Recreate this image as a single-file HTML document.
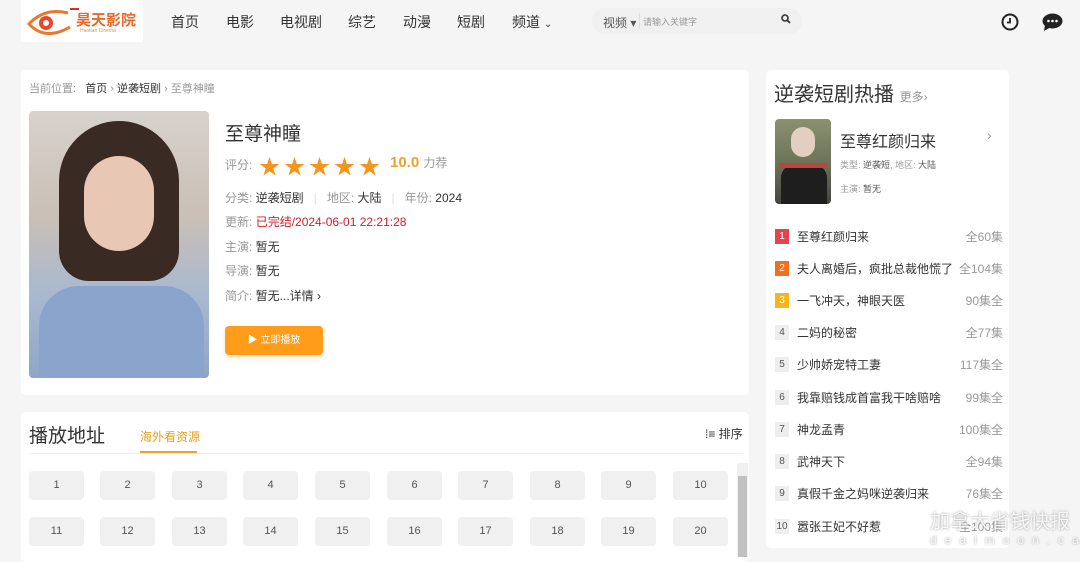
<!DOCTYPE html>
<html><head><meta charset="utf-8"><style>
*{margin:0;padding:0;box-sizing:border-box}
body{width:1080px;height:557px;overflow:hidden;background:#f5f5f5;font-family:"Liberation Sans","Noto Sans CJK SC",sans-serif;color:#333;position:relative}
.a{position:absolute}
.nav span{position:absolute;top:12px;font-size:14px;color:#333}
.card{position:absolute;background:#fff;border-radius:5px}
.lbl{color:#999}
.row{position:absolute;left:225px;font-size:12px;color:#333}
.ep{position:absolute;width:55px;height:29px;background:#f0f0f0;border-radius:4px;font-size:11px;color:#555;text-align:center;line-height:29px}
.rk{position:absolute;left:775px;width:230px;font-size:12px;height:16px;line-height:16px}
.rk b{display:inline-block;width:14px;height:15px;font-weight:normal;font-size:10px;text-align:center;background:#eee;color:#555;margin-right:8px;vertical-align:top}
.rk i{font-style:normal;position:absolute;right:2px;color:#999}
</style></head><body>
<div class="a" style="left:21px;top:0;width:122px;height:42px;background:#fff"></div>
<svg class="a" style="left:24px;top:3px" width="56" height="38" viewBox="0 0 56 38">
<path d="M4 22 Q20 4 44 10" stroke="#e8792b" stroke-width="3" fill="none"/>
<path d="M6 22 Q22 38 46 24" stroke="#e8792b" stroke-width="3" fill="none"/>
<circle cx="22" cy="20" r="7" fill="#e8492b"/><circle cx="22" cy="20" r="3" fill="#fff"/>
<rect x="46" y="5" width="9" height="2" fill="#d03030"/></svg>
<div class="a" style="left:76px;top:9px;font-size:15px;font-weight:bold;color:#e86a2b">昊天影院</div>
<div class="a" style="left:80px;top:28px;font-size:5px;color:#c9a050">Haotian Cinema</div>
<div class="nav">
<span style="left:171px">首页</span><span style="left:226px">电影</span><span style="left:280px">电视剧</span><span style="left:348px">综艺</span><span style="left:403px">动漫</span><span style="left:457px">短剧</span><span style="left:512px">频道 <small style="font-size:10px">⌄</small></span>
</div>
<div class="a" style="left:592px;top:8px;width:210px;height:26px;background:#f0f0f0;border-radius:13px"></div>
<div class="a" style="left:603px;top:14px;font-size:12px;color:#555">视频 ▾</div>
<div class="a" style="left:639px;top:13px;width:1px;height:16px;background:#ddd"></div>
<div class="a" style="left:643px;top:15px;font-size:9px;color:#999">请输入关键字</div>
<svg class="a" style="left:781px;top:14px" width="10" height="10" viewBox="0 0 10 10"><circle cx="4" cy="4" r="3" stroke="#333" stroke-width="1.6" fill="none"/><path d="M6 6l3 3" stroke="#333" stroke-width="1.8"/></svg>
<svg class="a" style="left:1001px;top:13px" width="18" height="18" viewBox="0 0 18 18"><circle cx="9" cy="9" r="7.5" stroke="#222" stroke-width="2" fill="none"/><path d="M9 5v4.5H6" stroke="#222" stroke-width="1.8" fill="none"/></svg>
<svg class="a" style="left:1042px;top:13px" width="21" height="19" viewBox="0 0 21 19"><ellipse cx="10.5" cy="8" rx="10" ry="7.5" fill="#222"/><path d="M3 12 L2 18 L9 14z" fill="#222"/><circle cx="6.5" cy="8" r="1.3" fill="#fff"/><circle cx="10.5" cy="8" r="1.3" fill="#fff"/><circle cx="14.5" cy="8" r="1.3" fill="#fff"/></svg>

<div class="card" style="left:21px;top:70px;width:728px;height:325px"></div>
<div class="a" style="left:29px;top:80px;font-size:11px;color:#999">当前位置: &nbsp; <span style="color:#333">首页</span> › <span style="color:#333">逆袭短剧</span> › 至尊神瞳</div>
<div class="a" style="left:29px;top:111px;width:180px;height:267px;border-radius:4px;overflow:hidden;background:linear-gradient(180deg,#d8d2cc 0%,#c9bfb6 40%,#a8b8d0 70%,#8fa6c8 100%)">
<div class="a" style="left:30px;top:10px;width:120px;height:160px;border-radius:60px 60px 30px 30px;background:#3a2a24"></div>
<div class="a" style="left:55px;top:45px;width:70px;height:95px;border-radius:35px;background:#e8c8b4"></div>
<div class="a" style="left:10px;top:175px;width:165px;height:100px;border-radius:40px 40px 0 0;background:#8aa4cc"></div>
</div>
<div class="a" style="left:225px;top:119px;font-size:19px;color:#333">至尊神瞳</div>
<div class="row" style="top:156px"><span class="lbl">评分:</span></div>
<div class="a" style="left:259px;top:151px;font-size:21px;color:#f7941d;letter-spacing:4px">★★★★★</div>
<div class="a" style="left:390px;top:154px;font-size:15px;color:#f0a030;font-weight:bold">10.0 <span style="font-size:12px;color:#999;font-weight:normal">力荐</span></div>
<div class="row" style="top:189px"><span class="lbl">分类:</span> 逆袭短剧 <span style="color:#ddd">&nbsp;&nbsp;|&nbsp;&nbsp;</span> <span class="lbl">地区:</span> 大陆 <span style="color:#ddd">&nbsp;&nbsp;|&nbsp;&nbsp;</span> <span class="lbl">年份:</span> 2024</div>
<div class="row" style="top:213px"><span class="lbl">更新:</span> <span style="color:#d0202a">已完结/2024-06-01 22:21:28</span></div>
<div class="row" style="top:238px"><span class="lbl">主演:</span> 暂无</div>
<div class="row" style="top:262px"><span class="lbl">导演:</span> 暂无</div>
<div class="row" style="top:287px"><span class="lbl">简介:</span> 暂无...详情 ›</div>
<div class="a" style="left:225px;top:326px;width:98px;height:29px;background:#ff9d1a;border-radius:4px;color:#fff;font-size:10px;text-align:center;line-height:29px;box-shadow:0 2px 5px rgba(255,150,30,.3)">▶ 立即播放</div>

<div class="card" style="left:21px;top:412px;width:728px;height:150px"></div>
<div class="a" style="left:29px;top:421px;font-size:19px;color:#333">播放地址</div>
<div class="a" style="left:140px;top:428px;font-size:12px;color:#e8a020">海外看资源</div>
<div class="a" style="left:140px;top:451px;width:57px;height:2px;background:#f0a030"></div>
<div class="a" style="left:29px;top:453px;width:714px;height:1px;background:#eee"></div>
<div class="a" style="left:705px;top:425px;font-size:12px;color:#333">⁞≡ 排序</div>
<div class="a" style="left:737px;top:463px;width:11px;height:94px;background:#f0f0f0"></div>
<div class="a" style="left:738px;top:476px;width:9px;height:81px;background:#c1c1c1"></div>
<div class="ep" style="left:29px;top:471px">1</div><div class="ep" style="left:100px;top:471px">2</div><div class="ep" style="left:172px;top:471px">3</div><div class="ep" style="left:243px;top:471px">4</div><div class="ep" style="left:315px;top:471px">5</div><div class="ep" style="left:387px;top:471px">6</div><div class="ep" style="left:458px;top:471px">7</div><div class="ep" style="left:530px;top:471px">8</div><div class="ep" style="left:601px;top:471px">9</div><div class="ep" style="left:673px;top:471px">10</div>
<div class="ep" style="left:29px;top:517px">11</div><div class="ep" style="left:100px;top:517px">12</div><div class="ep" style="left:172px;top:517px">13</div><div class="ep" style="left:243px;top:517px">14</div><div class="ep" style="left:315px;top:517px">15</div><div class="ep" style="left:387px;top:517px">16</div><div class="ep" style="left:458px;top:517px">17</div><div class="ep" style="left:530px;top:517px">18</div><div class="ep" style="left:601px;top:517px">19</div><div class="ep" style="left:673px;top:517px">20</div>

<div class="card" style="left:766px;top:70px;width:243px;height:478px"></div>
<div class="a" style="left:774px;top:78px;font-size:20px;color:#333">逆袭短剧热播 <span style="font-size:12px;color:#999">更多›</span></div>
<div class="a" style="left:775px;top:119px;width:56px;height:85px;border-radius:4px;overflow:hidden;background:linear-gradient(180deg,#8a9070,#6e7458 50%,#444)">
<div class="a" style="left:16px;top:8px;width:24px;height:30px;border-radius:12px;background:#e2cfc2"></div>
<div class="a" style="left:6px;top:45px;width:46px;height:42px;border-radius:14px 14px 0 0;background:#1e1e1e"></div>
<div class="a" style="left:4px;top:44px;width:48px;height:5px;background:#b44"></div></div>
<div class="a" style="left:840px;top:128px;font-size:16px;color:#333">至尊红颜归来</div>
<div class="a" style="left:987px;top:127px;font-size:14px;color:#999">›</div>
<div class="a" style="left:840px;top:158px;font-size:9px;color:#999">类型: <span style="color:#555">逆袭短</span>, 地区: <span style="color:#555">大陆</span></div>
<div class="a" style="left:840px;top:182px;font-size:9px;color:#999">主演: <span style="color:#555">暂无</span></div>
<div class="rk" style="top:229px"><b style="background:#e8434a;color:#fff">1</b>至尊红颜归来<i>全60集</i></div>
<div class="rk" style="top:261px"><b style="background:#f07020;color:#fff">2</b>夫人离婚后，疯批总裁他慌了<i>全104集</i></div>
<div class="rk" style="top:293px"><b style="background:#f8b616;color:#fff">3</b>一飞冲天，神眼天医<i>90集全</i></div>
<div class="rk" style="top:325px"><b>4</b>二妈的秘密<i>全77集</i></div>
<div class="rk" style="top:357px"><b>5</b>少帅娇宠特工妻<i>117集全</i></div>
<div class="rk" style="top:390px"><b>6</b>我靠赔钱成首富我干啥赔啥<i>99集全</i></div>
<div class="rk" style="top:422px"><b>7</b>神龙孟青<i>100集全</i></div>
<div class="rk" style="top:454px"><b>8</b>武神天下<i>全94集</i></div>
<div class="rk" style="top:486px"><b>9</b>真假千金之妈咪逆袭归来<i>76集全</i></div>
<div class="rk" style="top:519px"><b>10</b>嚣张王妃不好惹<i>全100集</i></div>
<div class="a" style="left:930px;top:505px;font-size:20px;color:rgba(255,255,255,.85);text-shadow:0 0 2px #999">加拿大省钱快报</div>
<div class="a" style="left:930px;top:533px;font-size:12px;letter-spacing:8px;color:rgba(255,255,255,.8);text-shadow:0 0 2px #999">dealmoon.ca</div>
</body></html>
